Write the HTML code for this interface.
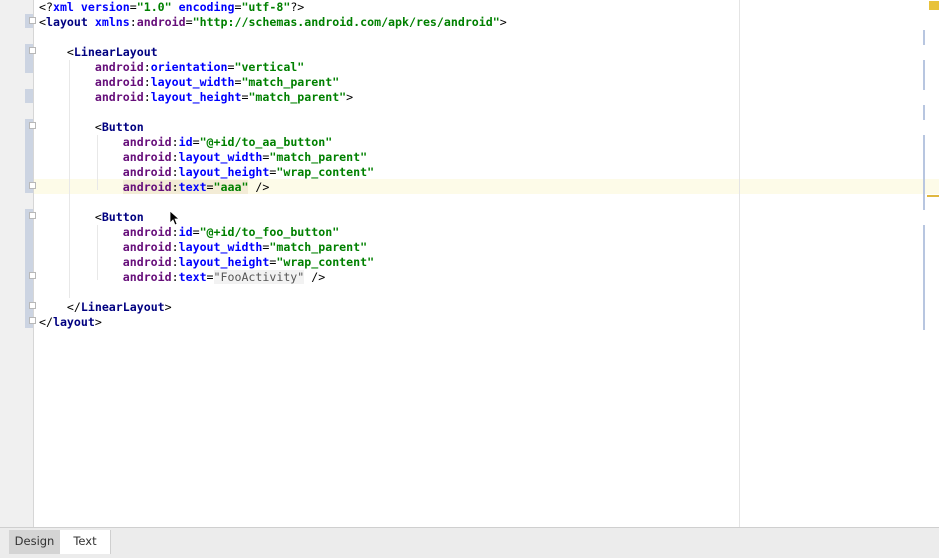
<!DOCTYPE html>
<html><head><meta charset="utf-8"><style>
body{margin:0;width:939px;height:557px;overflow:hidden;background:#fff;position:relative;font-family:"DejaVu Sans Mono","Liberation Mono",monospace}
.g{position:absolute;left:0;top:0;width:33px;height:527px;background:#f0f0f0;border-right:1px solid #d6d6d6}
.m{position:absolute;left:25px;width:8px;background:#ccd4e2}
.hl{position:absolute;left:0;top:179px;width:939px;height:15px;background:#fdfbe8}
.rm{position:absolute;left:739px;top:0;width:1px;height:527px;background:#e4e4e4}
.code{position:absolute;left:39px;top:0;font-size:11.6px;line-height:15px;white-space:pre;color:#000}
.t{color:#000080;font-weight:bold}.n{color:#660e7a;font-weight:bold}.a{color:#0000ff;font-weight:bold}.v{color:#008000;font-weight:bold}
.f{position:absolute;left:29px;width:7px;height:7px;background:#fff;border:1px solid #b8b8b8;box-sizing:border-box}
.rs{position:absolute;left:923px;width:2px;background:#b8c6e0}
.guide{position:absolute;width:1px;background:#e8e8e8}
.bar{position:absolute;left:0;top:527px;width:939px;height:30px;background:#ececec;border-top:1px solid #cfcfcf}
.tab{position:absolute;top:530px;height:24px;line-height:22px;font-family:"DejaVu Sans","Liberation Sans",sans-serif;font-size:11.5px;color:#333;text-align:center}
</style></head><body>
<div class="hl"></div>
<div class="g"></div>
<div class="m" style="top:14px;height:14px"></div>
<div class="m" style="top:44px;height:29px"></div>
<div class="m" style="top:89px;height:14px"></div>
<div class="m" style="top:119px;height:74px"></div>
<div class="m" style="top:209px;height:119px"></div>
<div class="f" style="top:47px"></div><div class="f" style="top:17px"></div>
<div class="f" style="top:122px"></div><div class="f" style="top:182px"></div>
<div class="f" style="top:212px"></div><div class="f" style="top:272px"></div>
<div class="f" style="top:302px"></div><div class="f" style="top:317px"></div>
<div class="rm"></div>
<div class="guide" style="left:69px;top:60px;height:238px"></div>
<div class="guide" style="left:97px;top:135px;height:55px"></div>
<div class="guide" style="left:97px;top:225px;height:55px"></div>
<div class="code"><span>&lt;?</span><span class="a">xml version</span>=<span class="v">"1.0"</span> <span class="a">encoding</span>=<span class="v">"utf-8"</span>?&gt;
&lt;<span class="t">layout</span> <span class="a">xmlns</span>:<span class="n">android</span>=<span class="v">"http://schemas.android.com/apk/res/android"</span>&gt;

    &lt;<span class="t">LinearLayout</span>
        <span class="n">android</span>:<span class="a">orientation</span>=<span class="v">"vertical"</span>
        <span class="n">android</span>:<span class="a">layout_width</span>=<span class="v">"match_parent"</span>
        <span class="n">android</span>:<span class="a">layout_height</span>=<span class="v">"match_parent"</span>&gt;

        &lt;<span class="t">Button</span>
            <span class="n">android</span>:<span class="a">id</span>=<span class="v">"@+id/to_aa_button"</span>
            <span class="n">android</span>:<span class="a">layout_width</span>=<span class="v">"match_parent"</span>
            <span class="n">android</span>:<span class="a">layout_height</span>=<span class="v">"wrap_content"</span>
            <span style="background:#f3ecd6"><span class="n">android</span>:<span class="a">text</span>=<span class="v">"aaa"</span></span> /&gt;

        &lt;<span class="t">Button</span>
            <span class="n">android</span>:<span class="a">id</span>=<span class="v">"@+id/to_foo_button"</span>
            <span class="n">android</span>:<span class="a">layout_width</span>=<span class="v">"match_parent"</span>
            <span class="n">android</span>:<span class="a">layout_height</span>=<span class="v">"wrap_content"</span>
            <span class="n">android</span>:<span class="a">text</span>=<span class="v" style="background:#f2f2f2;color:#555;font-weight:normal">"FooActivity"</span> /&gt;

    &lt;/<span class="t">LinearLayout</span>&gt;
&lt;/<span class="t">layout</span>&gt;</div>
<div style="position:absolute;left:929px;top:1px;width:10px;height:9px;background:#e8c23c"></div>
<div class="rs" style="top:30px;height:15px"></div>
<div class="rs" style="top:60px;height:30px"></div>
<div class="rs" style="top:105px;height:15px"></div>
<div class="rs" style="top:135px;height:75px"></div>
<div class="rs" style="top:225px;height:105px"></div>
<div style="position:absolute;left:927px;top:195px;width:12px;height:2px;background:#e0b840"></div>
<svg style="position:absolute;left:169px;top:210px" width="10" height="16" viewBox="0 0 10 16"><path d="M1 1 L1 13 L4 10 L6 15 L8 14 L6 9 L10 9 Z" fill="#000" stroke="#fff" stroke-width="0.8"/></svg>
<div class="bar"></div>
<div class="tab" style="left:9px;width:51px;background:#d4d4d4">Design</div>
<div class="tab" style="left:60px;width:50px;background:#fff;border-right:1px solid #cfcfcf">Text</div>
</body></html>
